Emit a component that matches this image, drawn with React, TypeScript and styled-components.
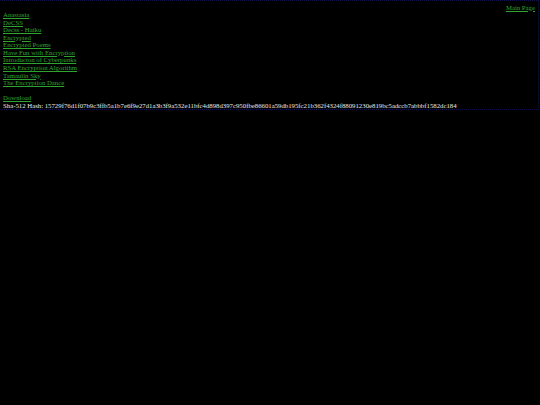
import React from 'react';
import styled, { createGlobalStyle } from 'styled-components';

const GlobalStyle = createGlobalStyle`
  html, body {
    margin: 0;
    padding: 0;
    background: #000000;
  }
  body {
    font-family: "Liberation Serif", "Times New Roman", serif;
    font-size: 6.77px;
    line-height: 7.55px;
    color: #e8e8e8;
  }
`;

const Frame = styled.div`
  width: 539px;
  border: 1px dotted #12124a;
  border-left-color: transparent;
  padding: 2.6px 2px 0 2px;
  box-sizing: border-box;
`;

const TopBar = styled.div`
  display: flex;
  justify-content: flex-end;
  padding-right: 1px;
`;

const List = styled.div`
  display: flex;
  flex-direction: column;
  align-items: flex-start;
`;

const Link = styled.a`
  color: #2fa52f;
  text-decoration: underline;
`;

const Spacer = styled.div`
  height: 7.55px;
`;

const Hash = styled.div`
  color: #e8e8e8;
  white-space: nowrap;
`;

const items = [
  'Anastasia',
  'DeCSS',
  'Decss - Haiku',
  'Encrypted',
  'Encrypted Poems',
  'Have Fun with Encryption',
  'Introducton of Cyberpunks',
  'RSA Encryption Algorithm',
  'Tamaulin Sky',
  'The Encryption Dance',
];

export default function App() {
  return (
    <>
      <GlobalStyle />
      <Frame>
        <TopBar>
          <Link href="#">Main Page</Link>
        </TopBar>
        <List>
          {items.map((t) => (
            <Link key={t} href="#">
              {t}
            </Link>
          ))}
          <Spacer />
          <Link href="#">Download</Link>
          <Hash>
            Sha-512 Hash: 15729f76d1f07b9c3ffb5a1b7e6f9e27d1a3b3f9a532e11bfc4d898d397c950fbe86601a59db195fc21b362f4324f88091230e819bc5adccb7abbbf1582dc184
          </Hash>
        </List>
      </Frame>
    </>
  );
}
